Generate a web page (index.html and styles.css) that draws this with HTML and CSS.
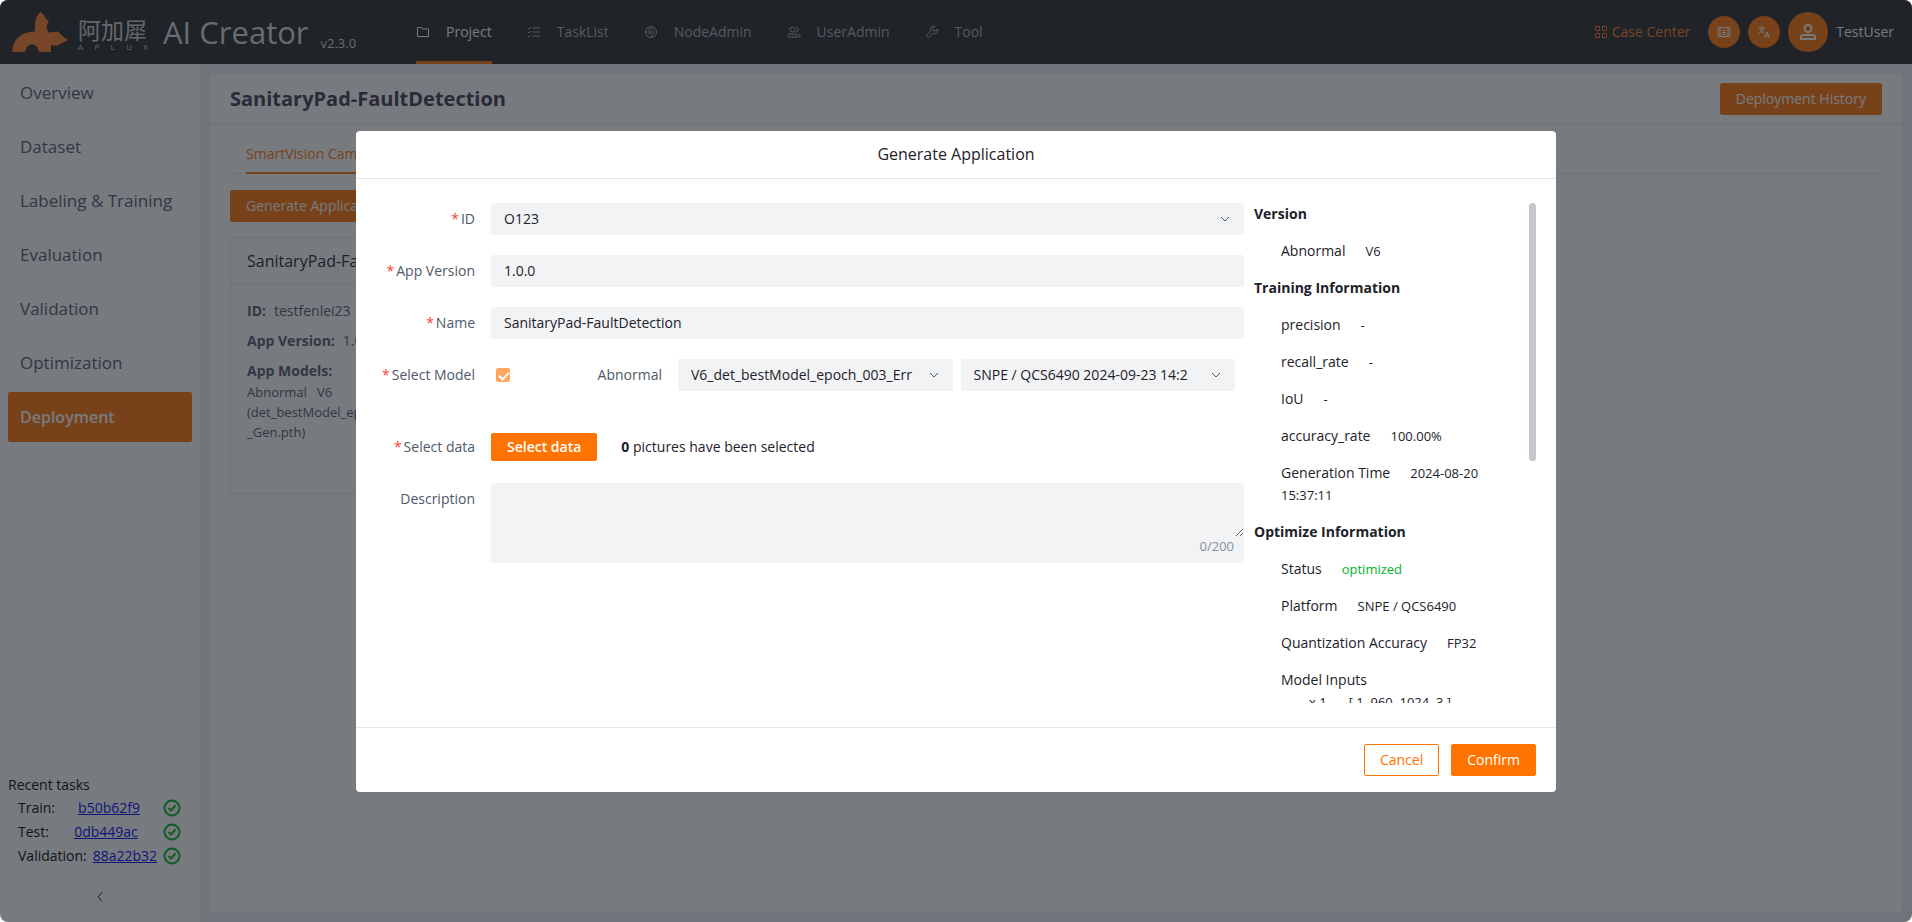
FILE: index.html
```html
<!DOCTYPE html>
<html lang="en">
<head>
<meta charset="utf-8">
<meta name="viewport" content="width=device-width, initial-scale=1">
<title>AI Creator - Deployment</title>
<link rel="stylesheet" href="styles.css">
</head>
<body>
<div class="app">
  <header class="topbar">
    <div class="brand">
      <svg class="brand-mark" viewBox="0 0 58 42" aria-hidden="true">
        <path fill="#ff7b26" d="M0 41C1 29 8 21 23 20.500V13C23 8 25 4 28.500 1L32 4L34 8L37 10.500C34 14 34 18 37 21.500L46 20.500C49 24 52 27 56 29C52 31 49 32.500 45 35L39 34V41H27C26 36 24 33.500 20 33.500C16 33.500 14 36 13 41Z"/>
      </svg>
      <div class="brand-name">
        <span class="brand-cn" lang="zh">阿加犀</span>
        <span class="brand-en"><span>A</span><span>P</span><span>L</span><span>U</span><span>X</span></span>
      </div>
      <span class="product">AI Creator</span>
      <span class="version">v2.3.0</span>
    </div>
    <nav class="nav">
      <a href="#project" class="nav-item active">
        <svg class="nav-icon" viewBox="0 0 14 14"><path d="M1.5 2.5h4l1 1.5h6v7.5h-11z"/></svg>Project</a>
      <a href="#tasks" class="nav-item">
        <svg class="nav-icon" viewBox="0 0 14 14"><path d="M5.5 3h7.5M5.5 7h7.5M5.5 11h7.5M1 3l1 1 2-2M1 7l1 1 2-2M1 11l1 1 2-2"/></svg>TaskList</a>
      <a href="#nodes" class="nav-item">
        <svg class="nav-icon" viewBox="0 0 14 14"><circle cx="7" cy="7" r="5.5"/><path d="M5.500 2L5 4.500l2.500 2.500L5 9.500M8 2v2.500l2.500 2.500L8 9.500V12M2 7h5"/></svg>NodeAdmin</a>
      <a href="#users" class="nav-item">
        <svg class="nav-icon" viewBox="0 0 14 14"><circle cx="5.500" cy="4.500" r="2.500"/><path d="M1 12V10.500Q1 9 3 9h5q2 0 2 1.500V12zM9 2.500a2.200 2.200 0 0 1 0 4.500M11 9q2 0 2 1.500V12h-1.500"/></svg>UserAdmin</a>
      <a href="#tool" class="nav-item">
        <svg class="nav-icon" viewBox="0 0 14 14"><path d="M10 1.500A3.500 3.500 0 0 0 5.500 6L1.500 10.500l2 2L8 8.500A3.500 3.500 0 0 0 12.500 4L10.500 6 8 5.500V3.500z"/></svg>Tool</a>
    </nav>
    <div class="tools">
      <a href="#cases" class="case-link">
        <svg class="case-icon" viewBox="0 0 14 14"><path d="M1.500 1.500h4v4h-4zM8.500 1.500h4v4h-4zM1.500 8.500h4v4h-4zM8.500 8.500h4v4h-4z"/></svg>Case Center</a>
      <button class="round" type="button" aria-label="Documentation">
        <svg viewBox="0 0 14 14"><path d="M3 3H1v8h2l4 1 4-1h2V3h-2M3 2l4 1 4-1v9l-4 1-4-1zM5 5.500h4M5 7.500h4M5 9.500h4"/></svg></button>
      <button class="round" type="button" aria-label="Language">
        <svg viewBox="0 0 14 14"><path d="M1 3h7M4.500 1v2M2 8q4-1 5-5M3 4q1 3 4 4M7.500 13l2.500-6 2.500 6M8.500 11h3"/></svg></button>
      <button class="round large" type="button" aria-label="Account">
        <svg viewBox="0 0 18 18"><circle cx="9" cy="5.500" r="3.500"/><path d="M2 16v-2q0-2 2-2h10q2 0 2 2v2z"/></svg></button>
      <span class="user">TestUser</span>
    </div>
  </header>

  <div class="shell">
    <aside class="sidebar">
      <nav class="menu">
        <a href="#overview">Overview</a>
        <a href="#dataset">Dataset</a>
        <a href="#labeling">Labeling &amp; Training</a>
        <a href="#evaluation">Evaluation</a>
        <a href="#validation">Validation</a>
        <a href="#optimization">Optimization</a>
        <a href="#deployment" class="current">Deployment</a>
      </nav>
      <section class="recent">
        <div class="recent-title">Recent tasks</div>
        <div class="task"><span>Train:</span><span class="task-link"><a href="#b50b62f9">b50b62f9</a></span>
          <svg viewBox="0 0 18 18"><circle cx="9" cy="9" r="7.500"/><path d="M5.500 9l2.500 2.500 4.500-5"/></svg></div>
        <div class="task"><span>Test:</span><span class="task-link"><a href="#0db449ac">0db449ac</a></span>
          <svg viewBox="0 0 18 18"><circle cx="9" cy="9" r="7.500"/><path d="M5.500 9l2.500 2.500 4.500-5"/></svg></div>
        <div class="task"><span>Validation:</span><span class="task-link"><a href="#88a22b32">88a22b32</a></span>
          <svg viewBox="0 0 18 18"><circle cx="9" cy="9" r="7.500"/><path d="M5.500 9l2.500 2.500 4.500-5"/></svg></div>
      </section>
      <button class="collapse" type="button" aria-label="Collapse menu">
        <svg viewBox="0 0 14 14"><path d="M9 2.500L5 7l4 4.500"/></svg></button>
    </aside>

    <main class="page">
      <div class="page-head">
        <h1>SanitaryPad-FaultDetection</h1>
        <button class="btn primary" type="button">Deployment History</button>
      </div>
      <div class="page-body">
        <div class="tabs"><a href="#camera" class="tab">SmartVision Camera</a></div>
        <button class="btn primary" type="button">Generate Application</button>
        <article class="card">
          <h2>SanitaryPad-FaultDetection</h2>
          <div class="card-body">
            <p><b>ID:</b>testfenlei23</p>
            <p><b>App Version:</b>1.0.0</p>
            <p><b>App Models:</b></p>
            <p class="models">Abnormal &nbsp; V6<br>(det_bestModel_epoch_003<br>_Gen.pth)</p>
          </div>
        </article>
      </div>
    </main>
  </div>
</div>

<div class="mask">
  <form class="modal" role="dialog" aria-labelledby="dialog-title">
    <div class="modal-head" id="dialog-title">Generate Application</div>
    <div class="modal-body">
      <div class="fields">
        <label class="label required" for="app-id">ID</label>
        <div class="select">
          <select id="app-id"><option>O123</option></select>
          <svg viewBox="0 0 12 12"><path d="M2 4l4 4 4-4"/></svg>
        </div>
        <label class="label required" for="app-version">App Version</label>
        <input class="text" id="app-version" type="text" value="1.0.0">
        <label class="label required" for="app-name">Name</label>
        <input class="text" id="app-name" type="text" value="SanitaryPad-FaultDetection">
        <label class="label required" for="use-model">Select Model</label>
        <div class="model-row">
          <input class="check" id="use-model" type="checkbox" checked disabled>
          <label class="model-name" for="model-file">Abnormal</label>
          <div class="select">
            <select id="model-file"><option>V6_det_bestModel_epoch_003_Err</option></select>
            <svg viewBox="0 0 12 12"><path d="M2 4l4 4 4-4"/></svg>
          </div>
          <div class="select">
            <select aria-label="Platform"><option>SNPE / QCS6490 2024-09-23 14:2</option></select>
            <svg viewBox="0 0 12 12"><path d="M2 4l4 4 4-4"/></svg>
          </div>
        </div>
        <label class="label required" for="pick-data">Select data</label>
        <div class="data-row">
          <button class="btn primary small" id="pick-data" type="button">Select data</button>
          <span><b>0</b> pictures have been selected</span>
        </div>
        <label class="label" for="description">Description</label>
        <div class="area">
          <textarea id="description" maxlength="200"></textarea>
          <span class="count">0/200</span>
        </div>
      </div>
      <div class="info">
        <div class="info-text">
          <h3>Version</h3>
          <p>Abnormal<small>V6</small></p>
          <h3>Training Information</h3>
          <p>precision<small>-</small></p>
          <p>recall_rate<small>-</small></p>
          <p>IoU<small>-</small></p>
          <p>accuracy_rate<small>100.00%</small></p>
          <p>Generation Time<small>2024-08-20 15:37:11</small></p>
          <h3>Optimize Information</h3>
          <p>Status<small class="ok">optimized</small></p>
          <p>Platform<small>SNPE / QCS6490</small></p>
          <p>Quantization Accuracy<small>FP32</small></p>
          <p>Model Inputs<span class="shape">x.1<span>[ 1, 960, 1024, 3 ]</span></span></p>
        </div>
        <div class="scroll"></div>
      </div>
    </div>
    <div class="modal-foot">
      <button class="btn outline" type="button">Cancel</button>
      <button class="btn primary" type="submit">Confirm</button>
    </div>
  </form>
</div>
</body>
</html>
```
FILE: styles.css
```css
* {
  box-sizing: border-box;
}

body {
  margin: 0;
  background: #fff;
  color: #1d2129;
  font: 14px/22px "Open Sans", "Noto Sans", "Noto Sans CJK SC", sans-serif;
}

button,
input,
select,
textarea {
  font: inherit;
  color: inherit;
}

h1,
h2,
h3,
p {
  margin: 0;
}

a {
  text-decoration: none;
}

svg {
  flex: none;
  fill: none;
  stroke: currentColor;
}

.app {
  display: flex;
  flex-direction: column;
  height: 100vh;
  overflow: hidden;
  border-radius: 8px;
}

/* Top bar */
.topbar {
  display: flex;
  flex: none;
  height: 64px;
  padding: 0 18px 0 12px;
  background: #272626;
  color: #fff;
}

.brand {
  display: flex;
  align-items: center;
  width: 404px;
}

.brand-mark {
  width: 58px;
  height: 42px;
  stroke: none;
}

.brand-name {
  display: flex;
  flex-direction: column;
  width: 70px;
  margin: 6px 15px 0 8px;
  color: #d0d0d4;
}

.brand-cn {
  font-size: 23px;
  line-height: 24px;
}

.brand-en {
  display: flex;
  justify-content: space-between;
  font-size: 8px;
  line-height: 10px;
}

.product {
  font-size: 31px;
  line-height: 40px;
  color: #d9d9dc;
}

.version {
  margin: 22px 0 0 12px;
  font-size: 13px;
  line-height: 20px;
  color: #d9d9dc;
}

.nav {
  display: flex;
  gap: 35px;
}

.nav-item {
  display: flex;
  align-items: center;
  gap: 16px;
  border-bottom: 3px solid transparent;
  padding-top: 3px;
  color: #a9aeb8;
}

.nav-item.active {
  border-color: #ff7400;
  color: #fff;
}

.nav-icon,
.case-icon {
  width: 14px;
  height: 14px;
}

.tools {
  display: flex;
  align-items: center;
  gap: 8px;
  margin-left: auto;
}

.case-link {
  display: flex;
  align-items: center;
  gap: 4px;
  margin-right: 10px;
  color: #ff7b26;
}

.round {
  display: flex;
  align-items: center;
  justify-content: center;
  width: 32px;
  height: 32px;
  padding: 0;
  border: 0;
  border-radius: 50%;
  background: #ff7400;
  color: #fff;
}

.round svg {
  width: 14px;
  height: 14px;
}

.round.large {
  width: 40px;
  height: 40px;
}

.round.large svg {
  width: 18px;
  height: 18px;
  stroke-width: 2;
}

/* Sidebar */
.shell {
  display: flex;
  flex: 1;
  min-height: 0;
  background: #efeef5;
}

.sidebar {
  display: flex;
  flex-direction: column;
  width: 200px;
  padding: 4px 8px 18px;
  background: #fff;
}

.menu {
  display: flex;
  flex-direction: column;
  gap: 4px;
}

.menu a {
  padding: 0 12px;
  border-radius: 2px;
  font-size: 17px;
  line-height: 50px;
  color: #4e5969;
}

.menu .current {
  background: #ff7400;
  color: #fff;
  font-size: 16px;
  font-weight: 600;
}

.recent {
  margin-top: auto;
  color: #000;
}

.task {
  display: flex;
  align-items: center;
  height: 24px;
  padding: 0 11px 0 10px;
}

.task-link {
  flex: 1;
  text-align: center;
}

.task a {
  color: #0000ee;
  text-decoration: underline;
}

.task svg {
  width: 18px;
  height: 18px;
  color: #00b42a;
  stroke-width: 2;
}

.collapse {
  align-self: center;
  margin-top: 22px;
  padding: 0;
  border: 0;
  background: none;
  line-height: 0;
}

.collapse svg {
  width: 14px;
  height: 14px;
}

/* Page */
.page {
  flex: 1;
  margin: 10px;
  border-radius: 4px;
  background: #fff;
}

.page-head {
  display: flex;
  align-items: center;
  justify-content: space-between;
  height: 50px;
  padding: 0 20px;
  border-bottom: 1px solid #e5e6eb;
}

.page-head h1 {
  font-size: 20px;
  font-weight: 700;
  color: #3a3a4c;
}

.page-body {
  padding: 11px 20px;
}

.btn {
  height: 32px;
  padding: 0 15px;
  border: 1px solid #ff7400;
  border-radius: 2px;
}

.btn.primary {
  background: #ff7400;
  color: #fff;
  font-weight: 500;
}

.btn.outline {
  background: #fff;
  color: #ff7400;
}

.btn.small {
  height: 28px;
  font-weight: 600;
}

.tabs {
  display: flex;
  height: 39px;
  margin-bottom: 16px;
  padding: 0 16px;
  border-bottom: 1px solid #e5e6eb;
}

.tab {
  height: 39px;
  border-bottom: 2px solid #ff7400;
  line-height: 38px;
  color: #ff7400;
}

.card {
  width: 300px;
  height: 257px;
  margin-top: 15px;
  border: 1px solid #e5e6eb;
}

.card h2 {
  padding: 0 16px;
  border-bottom: 1px solid #e5e6eb;
  font-size: 16px;
  font-weight: 400;
  line-height: 46px;
}

.card-body {
  padding: 15px 16px;
  color: #4e5969;
}

.card-body p {
  margin-bottom: 8px;
}

.card-body b {
  margin-right: 8px;
}

.card-body .models {
  margin-top: -8px;
  font-size: 13px;
  line-height: 20px;
}

/* Dialog */
.mask {
  position: fixed;
  inset: 0;
  display: flex;
  align-items: center;
  justify-content: center;
  border-radius: 8px;
  background: rgba(29, 33, 41, 0.6);
}

.modal {
  width: 1200px;
  max-width: 96vw;
  border-radius: 4px;
  background: #fff;
}

.modal-head {
  border-bottom: 1px solid #e5e6eb;
  font-size: 16px;
  line-height: 47px;
  text-align: center;
}

.modal-body {
  display: flex;
  gap: 10px;
  padding: 24px 20px;
}

.fields {
  display: grid;
  flex: 1;
  grid-template-columns: 99px 1fr;
  gap: 20px 16px;
  align-content: start;
}

.label {
  line-height: 32px;
  text-align: right;
  white-space: nowrap;
  color: #4e5969;
}

.required::before {
  content: "*";
  margin-right: 2px;
  color: #f53f3f;
}

.text,
.select select {
  width: 100%;
  height: 32px;
  padding: 0 12px;
  border: 1px solid #f2f3f5;
  border-radius: 2px;
  background: #f2f3f5;
}

.select {
  position: relative;
  min-width: 0;
}

.select select {
  padding-right: 36px;
  appearance: none;
  overflow: hidden;
}

.select svg {
  position: absolute;
  top: 10px;
  right: 13px;
  width: 12px;
  height: 12px;
  color: #4e5969;
  pointer-events: none;
}

.model-row {
  display: grid;
  grid-template-columns: 22px 144px 1fr 1fr;
  gap: 8px;
  align-items: center;
  height: 52px;
  padding: 0 9px 20px 5px;
}

.check {
  width: 14px;
  height: 14px;
  margin: 0;
  border-radius: 2px;
  appearance: none;
  background: #ffa75c;
}

.check::before {
  content: "";
  display: block;
  width: 8px;
  height: 4px;
  margin: 4px 3px;
  border-bottom: 2px solid #fff;
  border-left: 2px solid #fff;
  transform: rotate(-45deg);
}

.model-name {
  padding-right: 8px;
  text-align: right;
  color: #4e5969;
}

.data-row {
  display: flex;
  align-items: center;
  gap: 24px;
}

.area {
  display: flex;
  flex-direction: column;
  height: 80px;
  border-radius: 2px;
  background: #f2f3f5;
}

.area textarea {
  height: 54px;
  padding: 4px 12px;
  border: 0;
  outline: 0;
  background: none;
  resize: vertical;
}

.count {
  padding-right: 10px;
  font-size: 13px;
  line-height: 18px;
  text-align: right;
  color: #86909c;
}

.info {
  display: flex;
  justify-content: space-between;
  width: 282px;
  height: 500px;
}

.info-text {
  width: 240px;
  overflow: hidden;
}

.info-text h3,
.info-text p {
  margin-bottom: 15px;
  font-size: 14px;
}

.info-text p {
  padding-left: 27px;
}

.info-text small {
  margin-left: 20px;
  font-size: 13px;
  line-height: 20px;
}

.info-text .ok {
  color: #00b42a;
}

.shape {
  display: block;
  padding-left: 28px;
  font-size: 13px;
}

.shape span {
  margin-left: 22px;
}

.scroll {
  width: 7px;
  height: 258px;
  border-radius: 4px;
  background: #c5c6cc;
}

.modal-foot {
  display: flex;
  justify-content: flex-end;
  gap: 12px;
  padding: 16px 20px;
  border-top: 1px solid #e5e6eb;
}
```
